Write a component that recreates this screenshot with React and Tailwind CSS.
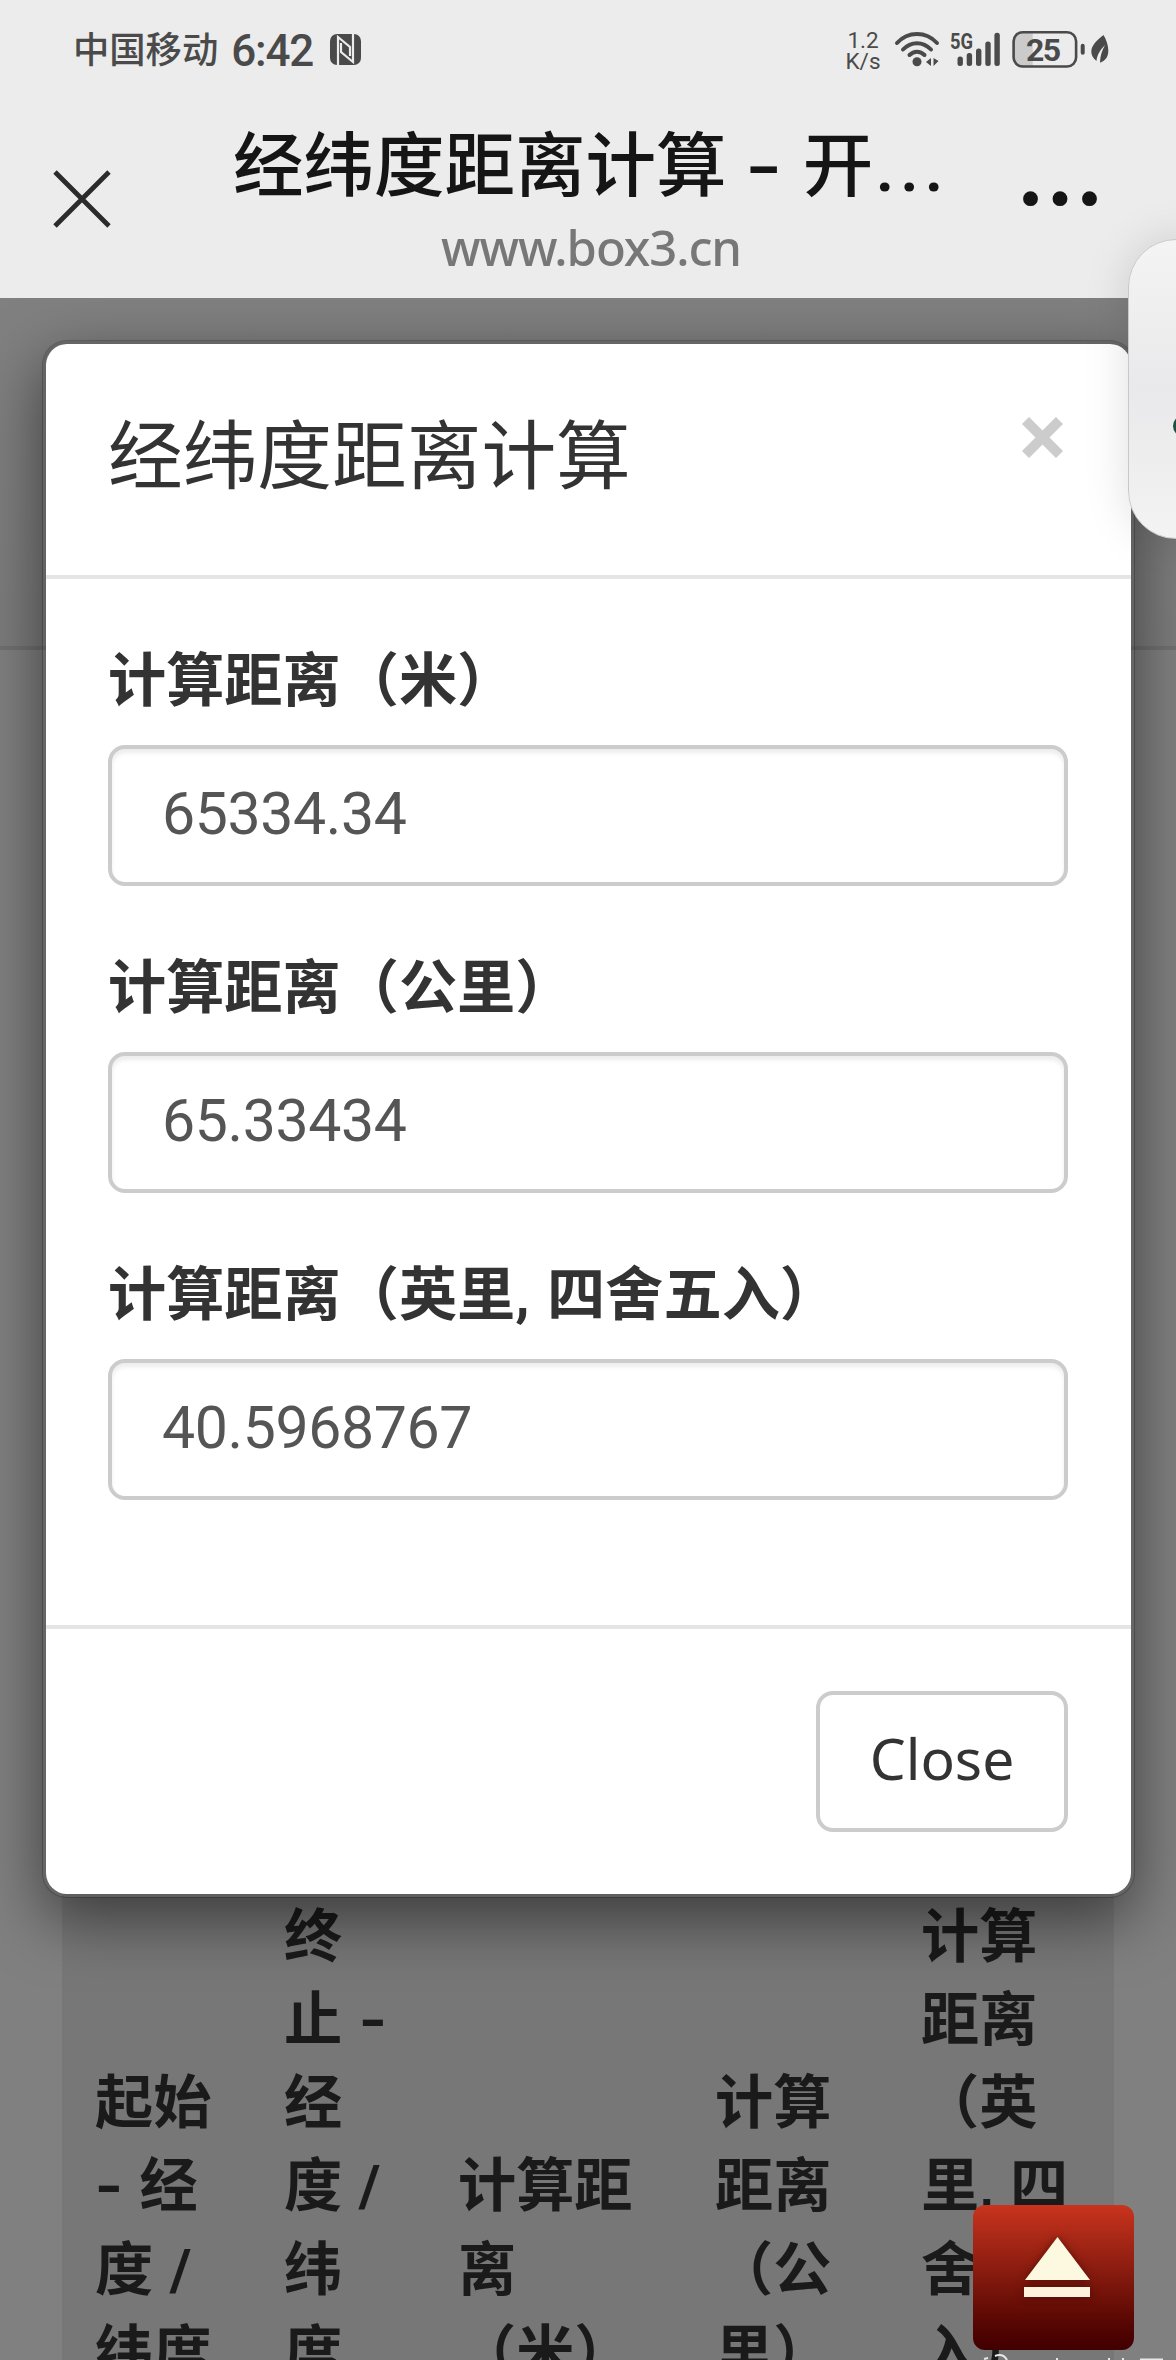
const fontCn = 'font-["Roboto","Noto_Sans_CJK_SC",sans-serif]';

const fields = [
  { label: '计算距离（米）', value: '65334.34' },
  { label: '计算距离（公里）', value: '65.33434' },
  { label: '计算距离（英里, 四舍五入）', value: '40.5968767' },
];

const columns = [
  { width: 'w-[189px]', lines: ['起始', '- 经', '度 /', '纬度'] },
  { width: 'w-[174px]', lines: ['终', '止 -', '经', '度 /', '纬', '度'] },
  { width: 'w-[257px]', lines: ['计算距', '离', '（米）'] },
  { width: 'w-[206px]', lines: ['计算', '距离', '（公', '里）'] },
  { width: 'w-[226px]', lines: ['计算', '距离', '（英', '里, 四', '舍五', '入）'] },
];

function NfcIcon() {
  return (
    <svg className="ml-[17px] mt-[34px] h-[32px] w-[32px]" viewBox="0 0 32 32">
      <rect width="31" height="31" rx="7" fill="#4a4a4a" />
      <path d="M8 31V3L20 13V22M23 0V28L11 18V9" fill="none" stroke="#ececec" strokeWidth="2.200" />
    </svg>
  );
}

function WifiIcon() {
  return (
    <svg className="h-[40px] w-[46px]" viewBox="0 0 46 40" fill="none" stroke="#4a4a4a" strokeWidth="4" strokeLinecap="round">
      <path d="M3 13C14 1 32 1 43 13" />
      <path d="M9 19.500C17 11 29 11 37 19.500" />
      <path d="M15.500 25C20 20.500 26 20.500 30.500 25" />
      <circle cx="23" cy="31.700" r="4.500" fill="#4a4a4a" stroke="none" />
      <path d="M32 32L37 28V36ZM44.500 31L39.500 28V36Z" fill="#4a4a4a" stroke="none" />
    </svg>
  );
}

function SignalIcon() {
  return (
    <svg className="h-[40px] w-[54px]" viewBox="0 0 54 40" fill="#4a4a4a">
      <text x="0" y="19" textLength="23" lengthAdjust="spacingAndGlyphs" fontFamily="Roboto" fontWeight="700" fontSize="22">5G</text>
      <rect x="7.500" y="26.500" width="5.400" height="9.500" rx="2.500" />
      <rect x="16.700" y="23" width="5.400" height="13" rx="2.500" />
      <rect x="26" y="18.500" width="5.400" height="17.500" rx="2.500" />
      <rect x="35.300" y="11.500" width="5.400" height="24.500" rx="2.500" />
      <rect x="44.400" y="2.700" width="5.400" height="33.300" rx="2.500" />
    </svg>
  );
}

function BatteryIcon() {
  return (
    <svg className="h-[40px] w-[100px]" viewBox="0 0 100 40">
      <path d="M11 2H22.700V37H11Q4 37 4 29V10Q4 2 11 2Z" fill="#cbcbcb" />
      <rect x="3.600" y="2.300" width="62.500" height="34.200" rx="9" fill="none" stroke="#4a4a4a" strokeWidth="2.600" />
      <text x="16" y="30.700" textLength="35" fontFamily="Roboto" fontWeight="700" fontSize="32" fill="#4a4a4a">25</text>
      <rect x="70.700" y="13.700" width="4" height="11" rx="2" fill="#4a4a4a" />
      <path d="M93.500 5C99 14 102 29 90 32.700C90 26 92 21 95 15C90 20 87 25 86.500 31C76 22 83 13 93.500 5Z" fill="#4a4a4a" />
    </svg>
  );
}

function StatusBar() {
  return (
    <div className="flex h-[100px] justify-between pl-[73px] pr-[66px] text-[#4a4a4a]">
      <div className="flex">
        <span className="mt-[24px] text-[36.300px] font-medium leading-[54px]">中国移动</span>
        <span className="ml-[13px] mt-[24px] text-[44px] font-medium leading-[54px] tracking-[-1.200px]">6:42</span>
        <NfcIcon />
      </div>
      <div className="flex pt-[30px]">
        <div className="mr-[13px] w-[36px] text-center text-[22.500px] leading-[21px]">
          <div>1.2</div>
          <div>K/s</div>
        </div>
        <WifiIcon />
        <div className="ml-[10px]"><SignalIcon /></div>
        <div className="ml-[6px]"><BatteryIcon /></div>
      </div>
    </div>
  );
}

function TitleBar() {
  return (
    <div className="flex h-[198px] justify-between pl-[53px] pr-[79px]">
      <svg className="mt-[70px] h-[58px] w-[58px]" viewBox="0 0 58 58" stroke="#2b2b2b" strokeWidth="4.800">
        <path d="M2 2L56 56M56 2L2 56" />
      </svg>
      <div className="w-[712px] pl-[48px]">
        <h1 className="mt-[15px] flex justify-center whitespace-pre text-[70.500px] font-medium leading-[104px] text-[#151515]">
          经纬度距离计算 <span className="ml-[8px] mr-[9px] inline-block w-[42px] scale-x-[1.450] text-center">-</span> 开<span className="ml-[2px] tracking-[5px]">...</span>
        </h1>
        <div className='mt-[-2px] text-center font-["Noto_Sans"] text-[49px] font-medium leading-[60px] tracking-[-1.100px] text-[#777]'>www.box3.cn</div>
      </div>
      <svg className="mt-[91px] h-[16px] w-[74px]" viewBox="0 0 74 16" fill="#151515">
        <circle cx="7.500" cy="7.700" r="7.400" />
        <circle cx="37" cy="7.700" r="7.400" />
        <circle cx="66.500" cy="7.700" r="7.400" />
      </svg>
    </div>
  );
}

function Modal() {
  return (
    <div className="absolute left-[42px] top-[42px] w-[1093px] rounded-[25px] border-4 border-black/20 bg-white bg-clip-padding shadow-[0_21px_62px_rgba(0,0,0,0.5)]">
      <div className="flex h-[235px] items-start justify-between border-b-4 border-[#e5e5e5] pl-[62px] pr-[68px]">
        <h4 className="mt-[68px] text-[74.700px] leading-[92px] text-[#333]">经纬度距离计算</h4>
        <svg className="mt-[73px] h-[41px] w-[41px]" viewBox="0 0 41 41" stroke="#ccc" strokeWidth="10">
          <path d="M3.500 3.500L37.500 37.500M37.500 3.500L3.500 37.500" />
        </svg>
      </div>
      <div className="h-[1046px] pl-[62px] pr-[63px] pt-[61px]">
        {fields.map((f) => (
          <div key={f.label} className="h-[307px]">
            <label className="block h-[105px] whitespace-nowrap text-[58.200px] font-bold leading-[83px] text-[#333] [word-spacing:3px]">{f.label}</label>
            <div className="h-[141px] rounded-[17px] border-4 border-[#ccc] pl-[50px] text-[59px] leading-[130px] tracking-[-0.400px] text-[#555] shadow-[inset_0_4px_4px_rgba(0,0,0,0.075)]">
              {f.value}
            </div>
          </div>
        ))}
      </div>
      <div className="flex h-[269px] justify-end border-t-4 border-[#e5e5e5] pr-[63px] pt-[62px]">
        <button className='h-[141px] w-[252px] rounded-[17px] border-4 border-[#ccc] bg-white pb-[5px] font-["Noto_Sans"] text-[57px] text-[#333]'>Close</button>
      </div>
    </div>
  );
}

// hyphens are drawn wider than the font's own
function HeadLine({ text }) {
  return (
    <div className="[word-spacing:2px]">
      {text.split(/(-)/).map((part, i) =>
        part === '-' ? (
          <span key={i} className="inline-block w-[28px] scale-x-[1.250] text-center">-</span>
        ) : part
      )}
    </div>
  );
}

export default function App() {
  return (
    <div className={`relative h-[2360px] w-[1176px] overflow-hidden bg-[#ececec] ${fontCn}`}>
      <StatusBar />
      <TitleBar />
      <main className="relative flex h-[2062px] flex-col overflow-hidden bg-[#808080]">
        <div className="h-[352px] shrink-0 border-b-4 border-[#717171] bg-linear-to-b from-[#808080] to-[#7c7c7c]" />
        <div className="mx-[62px] mt-[1160px] flex h-[600px] shrink-0 items-start bg-[#777] pt-[86px] text-[58.200px] font-bold leading-[83.200px] text-[#1a1a1a]">
          {columns.map((c, i) => (
            <div key={i} className={`flex h-[499px] shrink-0 flex-col justify-end whitespace-nowrap pl-[33px] ${c.width}`}>
              {c.lines.map((line) => <HeadLine key={line} text={line} />)}
            </div>
          ))}
        </div>
        <Modal />
      </main>

      {/* back to top */}
      <div className="absolute left-[973px] top-[2205px] h-[145px] w-[161px] rounded-[12px] bg-linear-to-b from-[#c9341d] via-[#83190e] to-[#400000]">
        <svg className="h-[145px] w-[161px] drop-shadow-[0_0_4px_rgba(60,10,0,0.7)]" viewBox="0 0 161 145">
          <path d="M84.500 32L117 75H52Z" fill="#fdf9e0" />
          <rect x="51" y="82" width="66" height="10" fill="#fdf3dc" />
        </svg>
      </div>

      {/* upper edge of the watermark */}
      <svg className="absolute left-[980px] top-[2350px] h-[10px] w-[190px]" viewBox="0 0 190 10" fill="none" stroke="#e8e8e8" strokeWidth="2">
        <path d="M15 6Q23 3 27 10M4 9L8 8M77 8V10M129 8V10M143 8V10M160 9.500H183" />
      </svg>

      {/* floating side panel */}
      <div className="absolute left-[1128px] top-[239px] h-[300px] w-[100px] rounded-[48px] border border-[#c8c8c8] bg-linear-to-b from-[#f4f4f4] via-[#e9e9eb] to-[#f3f3f3] shadow-[0_0_45px_rgba(0,0,0,0.13)]">
        <div className="ml-[44px] mt-[175px] h-[22px] w-[22px] rounded-full bg-[#1c4f42]" />
      </div>
    </div>
  );
}
